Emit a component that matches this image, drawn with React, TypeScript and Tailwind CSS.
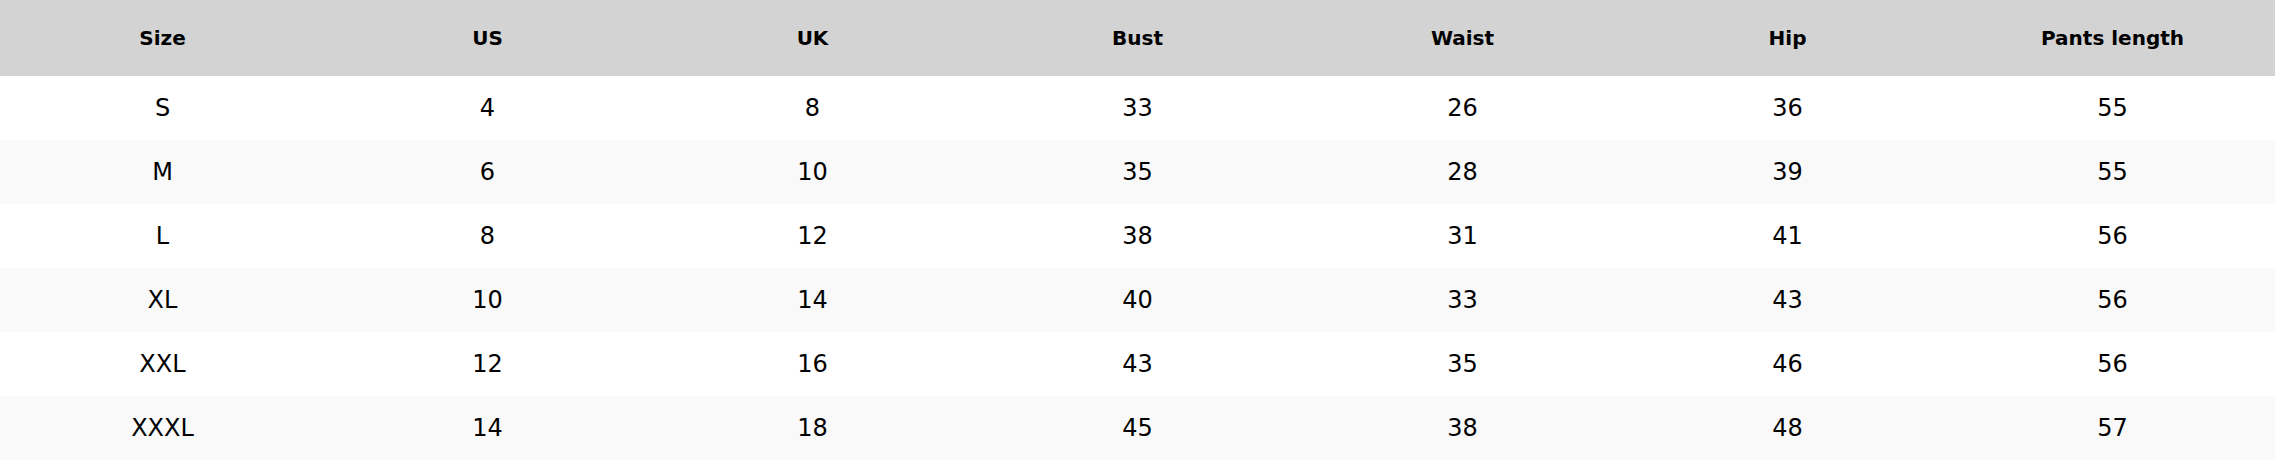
import React from "react";

const headers = ["Size", "US", "UK", "Bust", "Waist", "Hip", "Pants length"];
const rows = [
  ["S", "4", "8", "33", "26", "36", "55"],
  ["M", "6", "10", "35", "28", "39", "55"],
  ["L", "8", "12", "38", "31", "41", "56"],
  ["XL", "10", "14", "40", "33", "43", "56"],
  ["XXL", "12", "16", "43", "35", "46", "56"],
  ["XXXL", "14", "18", "45", "38", "48", "57"],
];

export default function App() {
  return (
    <div
      className="w-[2275px] bg-white text-black"
      style={{ fontFamily: '"DejaVu Sans", Verdana, sans-serif' }}
    >
      <div className="grid grid-cols-7 h-[76px] items-center bg-[#d3d3d3]">
        {headers.map((h) => (
          <div key={h} className="text-center font-bold text-[20px]">
            {h}
          </div>
        ))}
      </div>
      {rows.map((r, i) => (
        <div
          key={i}
          className={
            "grid grid-cols-7 h-[64px] items-center " +
            (i % 2 === 1 ? "bg-[#f9f9f9]" : "bg-white")
          }
        >
          {r.map((c, j) => (
            <div key={j} className="text-center text-[24px]">
              {c}
            </div>
          ))}
        </div>
      ))}
    </div>
  );
}
